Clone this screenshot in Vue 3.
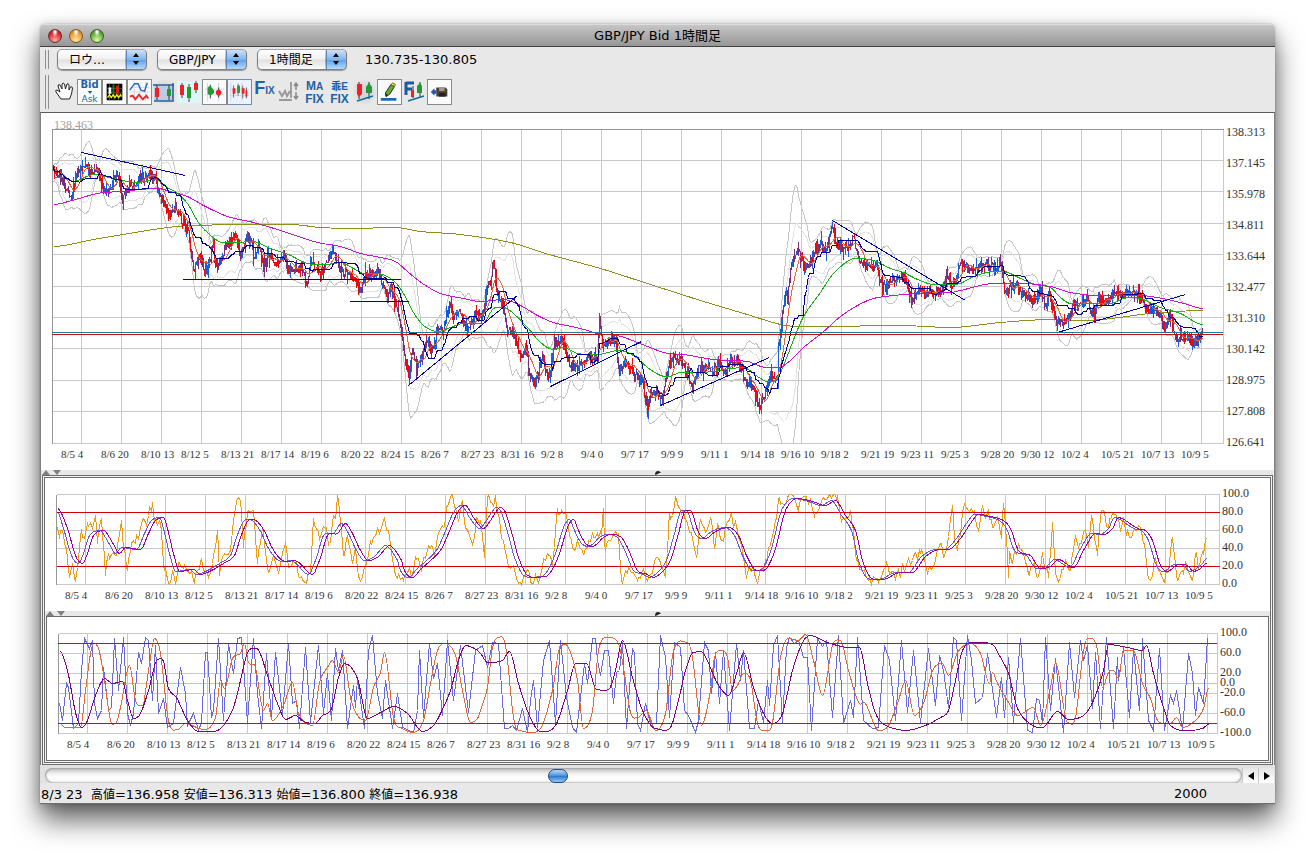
<script setup>
import { ref } from 'vue'

const styleKind = ref('ロウ…')
const pair = ref('GBP/JPY')
const period = ref('1時間足')
const scroll = ref(427)

const ohlc = [['高値', '136.958'], ['安値', '136.313'], ['始値', '136.800'], ['終値', '136.938']]
const days = [
  '8/5 4', '8/6 20', '8/10 13', '8/12 5', '8/13 21', '8/17 14', '8/19 6', '8/20 22', '8/24 15', '8/26 7',
  '8/27 23', '8/31 16', '9/2 8', '9/4 0', '9/7 17', '9/9 9', '9/11 1', '9/14 18', '9/16 10', '9/18 2',
  '9/21 19', '9/23 11', '9/25 3', '9/28 20', '9/30 12', '10/2 4', '10/5 21', '10/7 13', '10/9 5',
]
const priceLabels = ['138.313', '137.145', '135.978', '134.811', '133.644', '132.477', '131.310', '130.142', '128.975', '127.808', '126.641']
const priceRows = [129, 160, 191, 223, 254, 286, 317, 348, 380, 411, 443]
const stochLabels = ['100.0', '80.0', '60.0', '40.0', '20.0', '0.0']
const rciLabels = [['100.0', 636], ['60.0', 656], ['20.0', 676], ['0.0', 686], ['-20.0', 696], ['-60.0', 716], ['-100.0', 736]]

const pts = (s) => {
  const n = s.trim().split(/\s+/).map(Number)
  const out = []
  for (let i = 0; i < n.length; i += 2) out.push([n[i], n[i + 1]])
  return out
}
const line = (p) => 'M' + p.map(([x, y]) => x + ' ' + y.toFixed(1)).join('L')
// Cubic through the points, flat at every peak and trough so that it never overshoots.
const slope = (a, b, c) => ((b[1] - a[1]) * (c[1] - b[1]) <= 0 ? 0 : (c[1] - a[1]) / (c[0] - a[0]))
const smooth = (p) => {
  let d = `M${p[0][0]} ${p[0][1]}`
  for (let i = 0; i < p.length - 1; i++) {
    const a = p[i - 1] || p[i], b = p[i], c = p[i + 1], e = p[i + 2] || c
    const k = (c[0] - b[0]) / 3
    d += `C${(b[0] + k).toFixed(1)} ${(b[1] + k * slope(a, b, c)).toFixed(1)} ${(c[0] - k).toFixed(1)} ${(c[1] - k * slope(b, c, e)).toFixed(1)} ${c[0]} ${c[1]}`
  }
  return d
}
const rng = (seed) => () => {
  seed = (seed * 1664525 + 1013904223) % 4294967296
  return seed / 4294967296
}
const at = (p, x) => {
  let i = 0
  while (i < p.length - 2 && p[i + 1][0] < x) i++
  const [a, b] = [p[i], p[i + 1]]
  return a[1] + ((b[1] - a[1]) * (x - a[0])) / (b[0] - a[0])
}

const pricePts = pts(`53 170 60 172 67 190 71 196 75 177 80 168 86 162 90 173 97 168 102 190 110 187 117 170 122 198 128 185
137 183 140 177 148 173 155 178 157 190 162 200 168 210 177 207 182 223 188 233 193 270 200 252 204 270 210 257 213 240 215 268
222 253 228 243 235 232 240 257 247 233 252 240 253 260 258 243 263 267 268 253 275 263 283 253 288 267 300 267 307 283 310 260
317 270 323 268 333 250 340 270 343 272 350 270 360 290 365 272 378 272 387 295 390 287 395 300 400 323 408 376 412 347 416 370
423 350 428 340 432 350 437 330 443 327 449 303 453 320 458 307 463 323 468 330 473 313 482 317 486 290 490 280 493 260 496 290
502 303 507 330 513 333 522 357 525 347 530 377 534 382 542 355 547 379 551 363 554 340 562 340 570 367 580 363 590 353 597 357
599 318 602 343 615 338 619 370 625 362 635 370 642 383 647 405 653 389 662 400 665 377 673 353 680 360 687 373 692 387 697 367
703 370 708 362 713 373 718 360 724 373 728 363 737 358 742 372 747 383 750 377 755 397 760 407 765 393 770 370 777 382 778 347
782 310 785 293 787 300 790 267 793 253 798 247 803 267 810 260 820 243 827 250 832 223 837 247 847 245 853 238 858 257 867 267
877 267 882 287 888 283 902 273 907 287 911 299 917 290 928 293 940 290 947 277 953 283 960 262 973 270 983 262 997 268 1000 260
1004 293 1015 283 1023 293 1032 300 1040 290 1045 303 1049 290 1056 323 1068 318 1073 303 1087 300 1094 318 1098 297 1107 302
1114 290 1123 292 1138 293 1145 310 1150 307 1160 315 1164 327 1170 313 1175 337 1187 335 1193 343 1202 332`)

const rand = rng(2009)
const bars = []
let prev = 170
for (let x = 53; x <= 1202; x++) {
  const close = at(pricePts, x) + (rand() - 0.5) * 8
  const hi = Math.min(prev, close) - rand() * rand() * 11
  const lo = Math.max(prev, close) + rand() * rand() * 11
  bars.push({ x, open: prev, close, hi, lo })
  prev = close
}
const candles = { red: '', blue: '', purple: '' }
for (const b of bars) {
  const r = rand()
  const key = r < 0.3 ? 'purple' : b.close > b.open ? 'red' : 'blue'
  candles[key] += `M${b.x} ${b.hi.toFixed(0)}V${b.lo.toFixed(0)}`
  if (r > 0.7) candles[key] += `M${b.x + 1} ${Math.min(b.open, b.close).toFixed(0)}V${(Math.max(b.open, b.close) + 1).toFixed(0)}`
}
const windowOf = (i, n) => bars.slice(Math.max(0, i - n + 1), i + 1)
const kijun = 'M' + bars.map((b, i) => {
  const w = windowOf(i, 26)
  return b.x + ' ' + Math.round((Math.min(...w.map((v) => v.hi)) + Math.max(...w.map((v) => v.lo))) / 2)
}).join('L')
const fast = line(bars.map((b, i) => {
  const w = windowOf(i, 11)
  return [b.x, w.reduce((s, v) => s + v.close, 0) / w.length]
}))
const band = (k) => line(bars.map((b, i) => {
  const w = i < 20 ? bars.slice(0, i + 7) : windowOf(i, 21)
  const m = w.reduce((s, v) => s + v.close, 0) / w.length
  const sd = Math.sqrt(w.reduce((s, v) => s + (v.close - m) ** 2, 0) / w.length)
  return [b.x, m + k * sd]
}))
const outer = band(-3) + band(3)
const inner = band(-2) + band(2)

const green = smooth(pts(`53 177 65 177 73 181 93 174 113 178 137 182 155 179 167 187 177 193 187 203 198 222 210 235 222 242 235 242
252 241 270 248 288 254 307 263 327 264 340 262 353 268 363 273 382 274 395 282 403 293 413 312 423 325 437 331 450 327 463 323
482 323 493 308 503 307 513 313 527 327 540 342 553 349 563 347 577 353 597 354 618 350 633 355 647 367 660 375 668 376 680 372
700 372 743 367 757 376 767 381 777 378 785 360 802 318 820 292 833 273 855 258 873 260 890 268 903 272 917 279 933 284 950 284
960 283 973 276 993 271 1003 271 1020 278 1035 284 1050 287 1060 297 1070 303 1087 303 1110 303 1127 297 1140 298 1160 307
1180 313 1202 324`))
const magenta = smooth(pts(`53 204 68 201 97 193 120 191 157 188 173 192 187 196 203 205 227 216 253 222 280 230 317 242 340 246
360 253 380 257 395 261 407 271 422 283 440 293 463 298 480 301 503 299 520 305 537 315 553 322 580 328 597 333 617 335 637 342
660 351 668 353 683 354 713 359 747 361 765 367 778 367 790 360 803 347 822 332 840 316 857 305 873 298 893 295 920 293 950 292
960 290 993 283 1020 283 1050 286 1070 292 1097 295 1140 295 1167 299 1187 304 1202 308`))
const olive = smooth(pts(`53 246 93 239 160 228 190 225 290 224 320 227 350 228 395 227 420 231 460 234 510 242 545 253 600 268
650 284 700 300 750 315 785 325 820 326 900 325 950 327 1000 322 1050 319 1085 320 1150 313 1202 310`))
const trends = 'M81 152L185 175M408 385L517 295M550 386L641 341M660 405L769 357M832 220L965 300M1057 332L1185 294'

const slowPts = pts(`57 508 67 528 75 555 82 563 87 553 93 535 103 530 112 542 119 553 125 547 140 549 148 533 155 520 163 517
167 528 173 553 179 571 193 569 200 574 213 569 223 563 234 555 240 537 247 521 253 519 263 529 272 548 282 560 297 561 312 574
320 557 327 535 337 533 345 523 352 533 360 550 368 560 378 556 389 545 400 558 405 572 412 577 420 569 430 560 440 550 448 533
457 512 465 505 473 517 483 528 490 520 500 507 505 512 512 535 518 557 527 575 545 576 553 567 560 550 567 527 573 519 578 530
585 543 592 546 603 537 610 534 620 536 627 547 637 570 645 573 653 577 662 571 670 560 678 533 685 510 690 510 698 532 705 538
715 531 728 527 738 535 746 555 756 570 766 568 775 548 785 510 797 498 812 501 825 505 835 500 845 515 855 530 862 560 870 577
882 579 900 572 912 572 925 556 940 549 948 549 960 538 970 523 978 514 990 516 1003 520 1010 528 1018 550 1030 555 1040 568
1050 566 1058 559 1073 567 1083 550 1095 533 1103 534 1112 528 1118 517 1125 520 1137 528 1145 530 1152 540 1160 565 1167 571
1178 564 1187 565 1193 571 1200 568 1206 563`)
const slow = smooth(slowPts)
const lead = smooth([[57, 512], ...slowPts.slice(1).map(([x, y]) => [x - 4, y]), [1206, 558]])

const rawPts = pts(`57 527 59 538 62 530 66 547 69 577 72 563 74 578 77 567 81 529 84 538 87 523 92 528 95 515 97 543 101 518 105 575
108 553 116 555 121 520 123 547 127 570 130 550 135 543 142 520 145 522 148 515 152 502 154 520 160 523 163 563 165 567 168 583
172 570 175 583 178 562 183 568 190 573 194 583 200 560 207 573 212 563 217 530 219 575 223 555 230 550 233 520 237 498 240 500
243 547 247 512 253 510 257 563 262 527 268 572 273 555 278 572 285 543 288 567 295 560 300 577 305 582 310 573 313 518 319 540
322 530 325 528 329 543 332 522 335 518 337 495 340 522 343 555 347 535 352 563 355 547 359 578 365 565 370 540 376 533 383 520
388 530 392 560 397 578 403 580 408 570 412 575 415 557 418 558 420 568 425 558 431 545 435 552 439 532 443 527 447 505 451 494
454 507 458 520 462 500 465 528 473 540 476 517 480 520 484 557 487 498 492 503 495 495 498 515 500 530 505 552 510 568 515 573
520 582 526 570 530 580 537 580 542 567 547 553 552 565 554 547 557 508 560 513 565 512 568 527 571 540 574 550 577 540 582 550
587 547 592 532 597 533 601 535 603 508 604 545 610 540 618 533 621 580 624 575 628 567 633 572 637 580 642 570 647 580 652 573
657 557 660 562 665 577 667 553 669 512 672 515 675 497 678 507 683 510 688 527 693 543 697 555 699 523 705 532 710 518 714 548
717 523 722 540 730 515 737 530 742 550 746 578 752 565 758 580 765 560 770 545 775 520 779 497 786 503 792 495 798 510 805 496
815 512 822 498 830 495 836 498 842 520 850 510 856 560 863 570 868 580 878 582 886 562 895 580 903 567 912 560 920 552 928 570
935 560 940 543 943 557 947 543 952 505 954 540 957 550 963 508 968 510 973 512 978 530 982 505 985 517 988 510 992 527 997 517
1001 538 1003 503 1006 540 1008 577 1009 552 1011 562 1015 553 1019 547 1025 562 1029 575 1033 563 1037 577 1042 552 1048 577
1052 522 1055 573 1060 578 1065 560 1070 570 1075 535 1078 547 1084 530 1088 547 1091 515 1093 527 1097 555 1100 517 1103 510
1108 528 1112 512 1117 517 1120 530 1123 517 1126 535 1133 530 1140 527 1144 543 1147 572 1151 578 1155 557 1158 570 1163 580
1167 572 1170 552 1172 537 1175 563 1177 580 1182 570 1186 565 1192 580 1195 553 1198 568 1202 552 1206 538`)
const rough = (p, amp, lo, hi) => {
  const out = []
  p.forEach((a, i) => {
    out.push(a)
    const b = p[i + 1]
    if (!b) return
    for (let x = a[0] + 1; x < b[0]; x += 2) {
      const y = a[1] + ((b[1] - a[1]) * (x - a[0])) / (b[0] - a[0]) + (rand() - 0.5) * amp
      out.push([x, Math.max(lo, Math.min(hi, y))])
    }
  })
  return line(out)
}
const raw = rough(rawPts, 12, 494, 584)

const rciShort = line(pts(`59 703 62 720 66 683 68 687 73 728 78 723 81 670 84 638 89 648 92 640 94 703 97 718 101 710 103 667 108 710
111 707 114 638 118 690 123 637 127 713 130 725 133 713 138 652 141 663 145 637 148 640 152 700 155 645 158 713 163 698 167 727
173 723 180 667 185 693 187 725 193 713 198 730 201 722 205 652 207 652 211 717 213 710 218 638 223 720 228 643 233 673 237 638
241 637 247 722 253 638 257 693 261 728 266 653 271 718 275 652 282 715 288 643 292 703 296 700 299 728 305 647 310 722 318 645
323 713 327 673 331 720 335 648 338 670 342 650 347 728 353 685 355 707 357 678 364 728 368 650 372 635 377 693 382 718 385 680
392 728 397 693 402 727 413 732 417 710 419 650 423 717 429 643 433 678 437 663 442 715 447 640 453 700 460 645 468 712 475 650
482 645 487 667 492 642 498 643 501 687 504 728 508 728 512 725 516 730 522 708 527 732 530 700 533 680 537 727 543 660 549 640
555 723 560 640 566 697 572 727 576 732 580 697 584 663 587 683 592 638 595 638 597 660 600 675 604 650 608 650 613 703 616 672
619 670 622 642 626 728 632 648 634 653 637 723 640 730 645 703 650 723 656 723 660 635 665 657 669 717 674 642 680 647 684 710
688 715 695 732 698 720 704 642 708 650 711 693 715 652 719 703 723 650 729 730 736 643 740 680 743 650 749 728 754 728 758 700
763 722 767 680 769 705 773 645 777 635 782 723 786 647 789 637 794 643 798 640 803 657 807 657 811 730 817 638 822 646 826 640
832 717 838 635 843 723 850 700 853 717 857 637 863 720 872 728 878 727 884 645 889 660 895 720 901 640 907 712 913 650 920 722
928 648 935 705 939 655 943 670 948 707 953 637 956 640 961 720 967 635 971 660 975 703 982 697 987 653 996 717 1001 677
1004 717 1008 657 1013 722 1020 638 1027 730 1032 732 1036 698 1039 700 1042 723 1045 637 1050 710 1055 658 1063 732 1069 642
1074 697 1080 640 1083 660 1087 645 1092 708 1095 652 1100 728 1106 637 1113 728 1117 657 1118 680 1123 647 1129 717 1133 648
1139 710 1142 638 1148 720 1153 730 1159 648 1164 730 1170 695 1173 703 1176 690 1182 730 1188 653 1192 673 1195 715 1198 687
1203 703 1207 638`))
const rciMid = smooth(pts(`59 723 65 727 80 727 85 690 90 653 93 643 98 648 103 673 110 720 115 723 120 707 129 665 135 700 142 705
148 670 154 638 160 653 168 720 177 729 185 723 203 729 215 717 220 680 224 688 232 658 240 653 244 643 248 662 255 667 263 710
267 703 272 720 283 705 292 682 298 713 312 725 319 682 327 667 332 660 338 672 343 655 350 697 357 715 365 720 373 687 380 672
384 652 393 717 402 728 413 732 423 720 430 683 437 650 445 643 455 655 462 690 470 722 477 718 480 710 487 687 492 647 498 637
505 645 513 717 518 730 540 728 552 690 560 645 568 647 577 680 583 728 592 710 598 650 607 637 618 643 623 667 630 712 637 717
646 710 655 730 665 713 673 650 687 642 692 657 701 725 710 690 714 657 721 650 727 657 732 690 737 685 743 673 750 680 757 723
765 730 772 722 780 657 788 638 798 640 805 634 813 660 822 695 832 645 840 640 848 670 858 702 865 703 878 730 888 725 898 700
905 680 914 715 924 700 932 670 942 663 948 675 957 652 970 643 980 653 989 683 992 672 997 683 1007 700 1017 715 1033 707
1040 725 1050 687 1055 662 1067 722 1075 717 1082 657 1087 638 1096 645 1102 687 1108 672 1113 670 1118 678 1123 650 1133 650
1142 683 1150 698 1157 720 1170 723 1176 717 1182 727 1195 720 1203 708 1208 688`))
const rciLong = smooth(pts(`59 650 67 670 75 712 81 727 87 720 95 695 104 678 112 683 122 681 127 700 133 718 140 713 148 690 157 659
163 661 168 688 176 697 187 720 198 731 213 731 223 725 233 707 240 680 247 652 256 648 268 678 277 703 285 719 295 715 303 721
314 723 322 715 331 708 338 677 344 663 357 678 367 718 380 712 393 706 407 713 422 731 433 725 440 713 450 690 458 660 465 645
474 648 480 653 487 662 502 660 509 651 518 683 528 713 540 731 555 725 567 690 575 663 586 663 596 689 609 688 615 670 622 640
632 677 642 710 655 728 670 727 678 700 685 670 693 652 703 653 717 683 728 695 737 670 743 652 753 687 763 713 772 723 782 713
792 670 802 642 810 635 827 642 848 647 859 647 867 683 873 707 879 720 890 727 905 730 925 725 940 717 948 710 955 680 962 650
972 642 992 644 1000 657 1008 673 1017 708 1032 725 1042 727 1057 711 1068 719 1083 715 1093 700 1103 670 1108 644 1127 647
1142 650 1146 645 1153 673 1163 707 1170 725 1188 730 1202 728 1208 724`))
const verticals = (x0, top, bottom) => days.map((_, i) => `M${x0 + i * 40} ${top}V${bottom}`).join('')
</script>

<template>
  <main class="desk">
    <section class="window">
      <header class="titlebar">
        <div class="lights">
          <button class="light red" aria-label="閉じる"></button>
          <button class="light amber" aria-label="しまう"></button>
          <button class="light green" aria-label="拡大"></button>
        </div>
        <h1>GBP/JPY Bid 1時間足</h1>
      </header>

      <div class="row selects">
        <span class="grip"></span>
        <label class="combo"><select v-model="styleKind" aria-label="表示形式"><option>ロウ…</option></select>
          <svg viewBox="0 0 8 12"><path d="M4 0L7 4H1zM4 12L1 8H7z" /></svg></label>
        <label class="combo"><select v-model="pair" aria-label="通貨ペア"><option>GBP/JPY</option></select>
          <svg viewBox="0 0 8 12"><path d="M4 0L7 4H1zM4 12L1 8H7z" /></svg></label>
        <label class="combo"><select v-model="period" aria-label="足種"><option>1時間足</option></select>
          <svg viewBox="0 0 8 12"><path d="M4 0L7 4H1zM4 12L1 8H7z" /></svg></label>
        <output class="quote">130.735-130.805</output>
      </div>

      <div class="row tools">
        <span class="grip"></span>
        <button class="tool" aria-label="移動">
          <svg viewBox="0 0 25 26"><path d="M9 20L4 13Q3 11 5 11L8 13L6 7Q6 5 8 6L10 10L10 5Q11 3 12.500 5L13.500 10L15 5Q16.500 4 17 6L17 11L18.500 8Q20 7 20.500 9L19.500 15L17.500 20Z" fill="#fff" stroke="#222" /></svg>
        </button>
        <button class="tool on bid"><b>Bid</b><svg viewBox="0 0 8 4"><path d="M1 0H7L4 4z" fill="#1c5fa8" /></svg><small>Ask</small></button>
        <button class="tool on" aria-label="チャート配色">
          <svg viewBox="0 0 25 26"><path d="M4 4H21V22H4z" fill="#000" /><path d="M7 4V22M12 4V22M17 4V22M4 9H21M4 14H21" stroke="#4b6a1c" /><path d="M6 8H9V15H6z" fill="#fff" /><path d="M14 6H17V15H14z" fill="#e11" /><path d="M11 5V14" stroke="#3a3" /><path d="M5 19L7 16L9 19L11 16L13 19L15 16L17 19L19 16L20 18" fill="none" stroke="#ee2" stroke-width="1.500" /></svg>
        </button>
        <button class="tool on" aria-label="テクニカル">
          <svg viewBox="0 0 25 26"><path d="M2 8H23M2 13H23M7 2V23M13 2V23M19 2V23" stroke="#ccd8f2" /><path d="M2 11L7 4L11 4L14 11L18 12L21 3" fill="none" stroke="#2a66b4" stroke-width="1.500" /><path d="M2 18L5 17L8 21L12 16L16 21L20 17L22 20" fill="none" stroke="#e22" stroke-width="2" /></svg>
        </button>
        <button class="tool soft" aria-label="範囲">
          <svg viewBox="0 0 25 26"><path d="M2 7H22V22H2z" fill="#bccbe2" /><path d="M1 6H22M2 22H20M21 4V23" stroke="#2a5f9f" stroke-width="1.500" /><path d="M5 6V21M17 6V21" stroke="#333" /><path d="M3 9H7V18H3z" fill="#e22" /><path d="M15 10H19V17H15z" fill="#293" /></svg>
        </button>
        <button class="tool" aria-label="拡大表示">
          <svg viewBox="0 0 25 26"><path d="M0 2H24V24H0z" fill="#dff6f8" /><path d="M5 4V19M12 5V23M19 2V14" stroke="#345" /><path d="M3 6H7V16H3z" fill="#e22" /><path d="M10 8H14V19H10z" fill="#293" /><path d="M17 4H21V11H17z" fill="#e22" /></svg>
        </button>
        <button class="tool on" aria-label="足幅大">
          <svg viewBox="0 0 25 26"><path d="M2 10H23M2 16H23M5 3V23M17 3V23" stroke="#cbd4ee" /><path d="M8 5V20M17 8V19" stroke="#333" /><path d="M5 8L8 6L10 9L12 11V14L8 17L5 15z" fill="#293" /><path d="M14 12L17 10L20 12V15L17 18L14 15z" fill="#e22" /></svg>
        </button>
        <button class="tool on blue" aria-label="足幅小">
          <svg viewBox="0 0 25 26"><path d="M2 10H23M2 17H23M3 3V23M15 3V23" stroke="#cbd4ee" /><path d="M6 6V19M11 4V17M16 6V20M20 8V20" stroke="#667" /><path d="M5 9H8V15H5zM15 9H18V15H15z" fill="#e22" /><path d="M10 6H13V14H10z" fill="#293" /><path d="M19 11H21V18H19z" fill="#e22" /></svg>
        </button>
        <button class="tool word"><b class="big">F</b><b>IX</b></button>
        <button class="tool" aria-label="出来高">
          <svg viewBox="0 0 25 26"><path d="M2 12L5 17L8 12L10 17L13 12M2 21H15" fill="none" stroke="#999" stroke-width="2" /><path d="M14 3V19M19 5V11M17 7L19 4L21 7M19 13V20M17 17L19 20L21 17" fill="none" stroke="#888" stroke-width="1.500" /></svg>
        </button>
        <button class="tool stack"><b>M<i>A</i></b><b>FIX</b></button>
        <button class="tool stack"><b><i>乖</i><i>E</i></b><b>FIX</b></button>
        <button class="tool soft" aria-label="トレンド">
          <svg viewBox="0 0 25 26"><path d="M7 3V20M17 3V20" stroke="#333" /><path d="M5 5H10V15L7 18L5 15z" fill="#e22" /><path d="M14 8L17 4L20 8V14H14z" fill="#293" /><path d="M5 22L21 17" stroke="#12709c" stroke-width="1.500" /></svg>
        </button>
        <button class="tool on" aria-label="線を引く">
          <svg viewBox="0 0 25 26"><path d="M3 21H20" stroke="#2167b0" stroke-width="3" /><path d="M9 18L8 14L14 5L18 7L13 15z" fill="#6a3" stroke="#222" /><path d="M14 5L16 3L19 5L18 7z" fill="#ee3" stroke="#553" /><path d="M8 18L8 15L11 16z" fill="#221" /></svg>
        </button>
        <button class="tool" aria-label="線の固定">
          <svg viewBox="0 0 25 26"><path d="M4 3V16M4 4H12M4 10H10" stroke="#1b5a9e" stroke-width="3" fill="none" /><path d="M11 7V19M18 3V18" stroke="#333" /><path d="M9 11H12V18H9z" fill="#e22" /><path d="M15 7L18 4L20 7V14H15z" fill="#293" /><path d="M6 22L22 17" stroke="#12709c" stroke-width="1.500" /></svg>
        </button>
        <button class="tool on" aria-label="保存">
          <svg viewBox="0 0 25 26"><path d="M3 13L7 9V11H9V15H7V17z" fill="#2456b4" /><path d="M9 8H19L21 10V18H9z" fill="#4a4038" /><path d="M12 8H18V12H12z" fill="#a39a90" /><path d="M12 14H19V18H12z" fill="#222" /></svg>
        </button>
      </div>

      <div class="content">
        <svg class="chart" viewBox="41 113 1233 357" role="img" aria-label="価格チャート">
          <g class="plot">
            <path class="grid" :d="verticals(81, 129, 443)" />
            <path class="grid" :d="priceRows.map((y) => `M52 ${y}H1223`).join('')" />
            <path class="grid" d="M1223 129V443" />
            <path class="axis" d="M52 443V129H1223" />
            <clipPath id="price-area"><path d="M52 129H1223V443H52z" /></clipPath>
            <g clip-path="url(#price-area)">
              <path :d="inner" stroke="#e2e2e2" />
              <path :d="outer" stroke="#c6c6c6" />
              <path :d="olive" stroke="#8f8f20" />
              <path :d="candles.blue" stroke="#1560dd" />
              <path :d="candles.red" stroke="#e60a14" />
              <path :d="candles.purple" stroke="#7c2c78" />
              <path :d="fast" stroke="#e0683c" />
              <path :d="green" stroke="#18b018" />
              <path :d="magenta" stroke="#d010d0" />
              <path :d="kijun" stroke="#000096" />
              <path :d="trends" stroke="#0000a8" />
            </g>
          </g>
          <rect x="183" y="279" width="218" height="1" fill="#0000a8" />
          <rect x="350" y="301" width="59" height="1" fill="#0000a8" />
          <rect x="52" y="332" width="1171" height="1" fill="#1f7a9c" />
          <rect x="52" y="334" width="1171" height="1" fill="#c01010" />
          <text x="54" y="129" class="num faint">138.463</text>
          <text v-for="(t, i) in priceLabels" :key="t" x="1226" :y="136 + i * 31" class="num">{{ t }}</text>
          <text v-for="(t, i) in days" :key="t" :x="61 + i * 40" y="458" class="day">{{ t }}</text>
        </svg>

        <div class="splitter">
          <svg viewBox="0 0 20 5"><path d="M5 0L9 5H1zM12 0H20L16 5z" fill="#808080" /></svg>
          <svg class="knob" viewBox="0 0 6 5"><path d="M0 5Q0 1 3 1Q5 1 6 3L4 3L3 4z" fill="#222" /></svg>
        </div>

        <div class="frame">
          <div class="box">
            <svg class="chart" viewBox="45 478 1225 133" role="img" aria-label="ストキャスティクス">
              <g class="plot">
                <path class="grid" :d="verticals(85, 494, 584)" />
                <path class="grid" d="M56 494H1219V584H56M56 530H1219M56 548H1219" />
                <path class="axis" d="M56 494V584" />
                <path :d="raw" stroke="#f09a10" />
                <path d="M56 512H1219M56 566H1219" stroke="#cc0000" />
                <path :d="lead" stroke="#6a5ad8" />
                <path :d="slow" stroke="#a000a0" />
              </g>
              <text v-for="(t, i) in stochLabels" :key="t" x="1222" :y="497 + i * 18" class="num">{{ t }}</text>
              <text v-for="(t, i) in days" :key="t" :x="65 + i * 40" y="599" class="day">{{ t }}</text>
            </svg>
            <div class="splitter">
              <svg viewBox="0 0 20 5"><path d="M5 0L9 5H1zM12 0H20L16 5z" fill="#808080" /></svg>
              <svg class="knob" viewBox="0 0 6 5"><path d="M0 5Q0 1 3 1Q5 1 6 3L4 3L3 4z" fill="#222" /></svg>
            </div>
            <div class="box nested">
              <svg class="chart" viewBox="47 617 1221 143" role="img" aria-label="RCI">
                <g class="plot">
                  <path class="grid" :d="verticals(87, 633, 733)" />
                  <path class="grid" d="M58 633H1217V733H58M58 653H1217M58 673H1217M58 693H1217M58 713H1217" />
                  <path class="axis" d="M58 633V733" />
                </g>
                <rect x="58" y="683" width="1159" height="1" fill="#e8d020" />
                <g class="plot">
                  <path :d="rciShort" stroke="#6868e0" />
                  <path :d="rciMid" stroke="#e0683c" />
                  <path :d="rciLong" stroke="#800080" />
                </g>
                <rect x="58" y="643" width="1159" height="1" fill="#b81414" />
                <rect x="58" y="723" width="1159" height="1" fill="#b81414" />
                <text v-for="[t, y] in rciLabels" :key="t" x="1220" :y="y" class="num">{{ t }}</text>
                <text v-for="(t, i) in days" :key="t" :x="67 + i * 40" y="748" class="day">{{ t }}</text>
              </svg>
            </div>
          </div>
        </div>
      </div>

      <div class="scrollbar">
        <input v-model="scroll" type="range" min="0" max="1000" aria-label="表示位置" />
        <button class="arrow" aria-label="左へ"><svg viewBox="0 0 6 8"><path d="M6 0V8L0 4z" /></svg></button>
        <button class="arrow" aria-label="右へ"><svg viewBox="0 0 6 8"><path d="M0 0V8L6 4z" /></svg></button>
      </div>

      <footer class="status">
        <span>8/3 23&nbsp; <template v-for="[name, value] in ohlc" :key="name"><span class="kanji">{{ name }}</span>={{ value }}{{ ' ' }}</template></span>
        <span>2000</span>
      </footer>
    </section>
  </main>
</template>

<style>
body { background: #fff; }
</style>

<style scoped>
* { box-sizing: border-box; }
.desk { padding: 24px 40px 55px; overflow: hidden; font: 12px "DejaVu Sans", "Noto Sans CJK JP", sans-serif; color: #000; }
.window { background: #e8e8e8; border-radius: 5px 5px 0 0; box-shadow: 0 0 1px rgba(0, 0, 0, .6), 0 16px 28px rgba(0, 0, 0, .62), 0 2px 12px rgba(0, 0, 0, .2); }
button { padding: 0; margin: 0; border: 0; background: none; font: inherit; }
.titlebar { display: grid; grid-template-columns: 1fr auto 1fr; align-items: center; height: 23px; padding: 0 8px; border-radius: 5px 5px 0 0; border-top: 1px solid #dcdcdc; border-bottom: 1px solid #404040; background: linear-gradient(#c6c6c6, #969696); }
.titlebar h1 { margin: 0; font-size: 13px; font-weight: 400; line-height: 20px; }
.lights { display: flex; gap: 7px; }
.light { width: 14px; height: 14px; border-radius: 50%; border: 1px solid #6b3030; }
.light.red { background: radial-gradient(ellipse at 50% 15%, #fff 5%, transparent 35%), radial-gradient(circle at 50% 85%, #ffb0a8, #dc2a2e 60%, #8c1014); }
.light.amber { border-color: #84561c; background: radial-gradient(ellipse at 50% 15%, #fff 5%, transparent 35%), radial-gradient(circle at 50% 85%, #ffe8a0, #ef9c34 60%, #a85c10); }
.light.green { border-color: #3e5e28; background: radial-gradient(ellipse at 50% 15%, #fff 5%, transparent 35%), radial-gradient(circle at 50% 85%, #d8ffa0, #67ad3c 60%, #2f6a18); }
.row { display: flex; align-items: center; padding-left: 5px; }
.grip { align-self: stretch; width: 4px; margin: 3px 0; border: solid #8f8f8f; border-width: 0 1px; }
.selects { height: 25px; gap: 10px; }
.selects .grip { margin-right: -2px; }
.combo { position: relative; display: block; width: 90px; height: 21px; }
.combo select { appearance: none; width: 100%; height: 100%; padding: 0 22px 0 11px; border: 1px solid #808080; border-top-color: #a4a4a4; border-radius: 5px; color: #000; font: inherit; background: linear-gradient(90deg, transparent 68px, #5f86bd 68px, #5f86bd 69px, transparent 69px), linear-gradient(#cfe2f6, #7fb5ee 50%, #5a9fe8 52%, #b4dcff) right / 21px 100% no-repeat, linear-gradient(#fff, #f0f0f0 48%, #e0e0e0 52%, #fafafa); box-shadow: 0 1px 1px rgba(0, 0, 0, .35); }
.combo svg { position: absolute; right: 7px; top: 4px; width: 8px; height: 12px; pointer-events: none; }
.quote { margin-left: 8px; font-size: 13px; }
.tools { height: 40px; }
.tools .grip { margin-right: 3px; }
.tool { display: block; width: 25px; height: 26px; color: #1f62a8; line-height: 1; }
.tool > svg { display: block; width: 100%; height: 100%; }
.tool.on { border: 1px solid #8a8a8a; background: #fafafa; }
.tool.blue { border-color: #6a8cbc; background: #edf3fc; }
.tool.soft { background: radial-gradient(#d4d4dc 30%, #e8e8e8 75%); }
.tool.bid { display: flex; flex-direction: column; align-items: center; justify-content: space-between; font-size: 10px; }
.tool.bid svg { width: 6px; height: 3px; }
.tool.bid small { font-size: 9px; line-height: 9px; }
.tool.word, .tool.stack { font-family: "Liberation Sans", "Noto Sans CJK JP", sans-serif; font-weight: 700; }
.tool.word { display: flex; align-items: baseline; justify-content: center; font-size: 10px; }
.tool.word .big { font-size: 18px; }
.tool.stack { font-size: 12px; line-height: 12px; }
.tool.stack b { display: block; }
.tool.stack i { font-size: 10px; font-style: normal; }
.content { border: solid #808080; border-width: 1px 1px 0; border-top-color: #5c5c5c; }
.chart { display: block; width: 100%; height: auto; background: #fff; }
.plot { fill: none; shape-rendering: crispEdges; transform: translate(0.5px, 0.5px); }
.grid { stroke: #c8c8c8; }
.axis { stroke: #969696; }
.num, .day { font-family: "Liberation Serif", serif; fill: #333; }
.num { font-size: 12px; }
.day { font-size: 11px; }
.faint { fill: #a0a0a0; }
.splitter { position: relative; display: flex; height: 5px; background: #e8e8e8; }
.splitter svg { width: 20px; height: 5px; }
.splitter .knob { position: absolute; left: 50%; width: 6px; margin-left: -3px; }
.frame { margin: 0 1px; padding: 1px; border: 1px solid #6c6c6c; background: #f4f4f4; }
.box { border: 1px solid #6c6c6c; padding-bottom: 1px; background: #f4f4f4; }
.nested { margin: 0 1px; padding: 0; }
.scrollbar { display: flex; height: 18px; padding: 3px 1px 0 5px; background: #e0e0e0; }
.scrollbar input { appearance: none; flex: 1; min-width: 0; height: 15px; margin: 0; border-radius: 8px; background: linear-gradient(#b8b8b8, #eee 35%, #fff 60%, #f6f6f6); box-shadow: inset 1px 0 2px #999, inset -1px 0 2px #999; }
.scrollbar input::-webkit-slider-thumb { appearance: none; width: 20px; height: 14px; border: 1px solid #24477c; border-radius: 7px; background: linear-gradient(#b8d8f8, #5a96dc 45%, #2f74cc 50%, #8cc8ff); }
.arrow { width: 16px; background: linear-gradient(#e6e6e6, #fff); border-left: 1px solid #c8c8c8; }
.arrow svg { display: block; width: 6px; height: 8px; margin: auto; }
.status { display: flex; align-items: center; justify-content: space-between; height: 21px; padding: 0 68px 0 1px; border-bottom: 1px solid #707070; font-size: 13px; white-space: nowrap; }
.kanji { font-size: 12px; }
</style>
